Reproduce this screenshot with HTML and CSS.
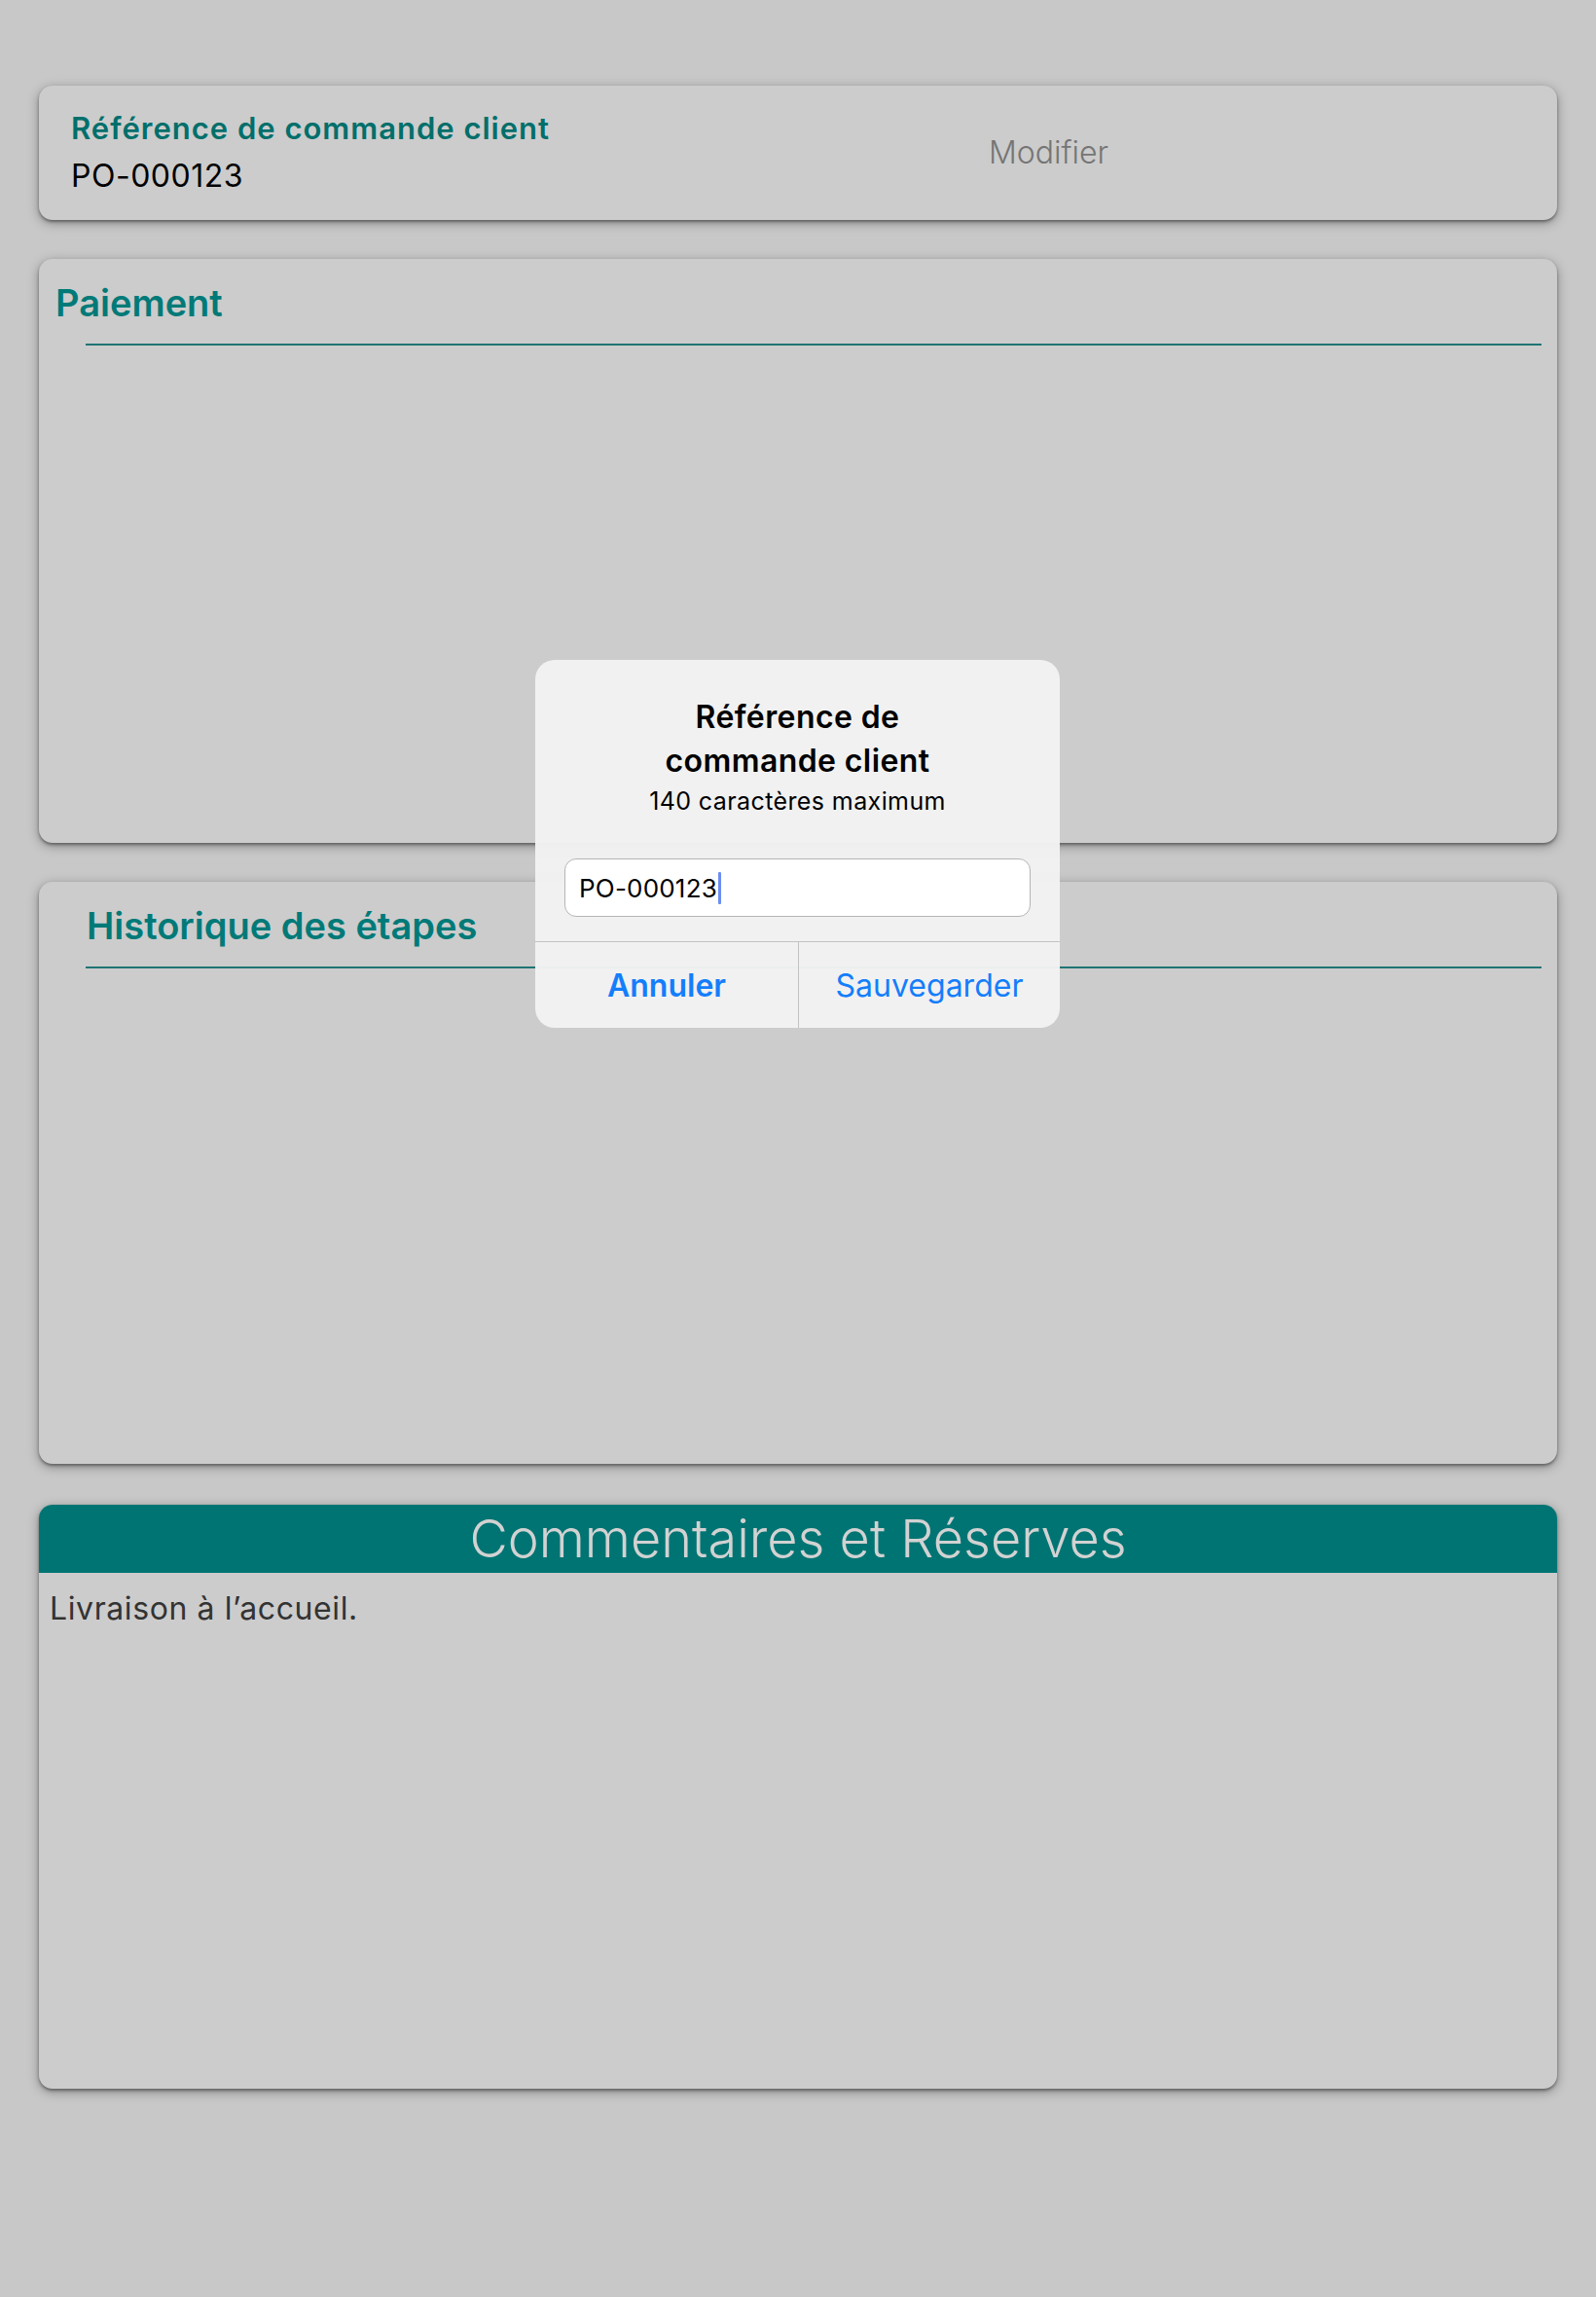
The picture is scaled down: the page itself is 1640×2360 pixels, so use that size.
FILE: index.html
```html
<!DOCTYPE html>
<html lang="fr">
<head>
<meta charset="utf-8">
<title>Commande</title>
<link rel="stylesheet" href="styles.css">
</head>
<body>
<main class="page">
  <section class="card card-ref">
    <div class="ref-block">
      <div class="ref-label">Référence de commande client</div>
      <div class="ref-value">PO-000123</div>
    </div>
    <div class="ref-action">Modifier</div>
  </section>

  <section class="card card-section card-pay">
    <h2 class="section-title pay-title">Paiement</h2>
    <div class="section-rule"></div>
  </section>

  <section class="card card-section card-hist">
    <h2 class="section-title hist-title">Historique des étapes</h2>
    <div class="section-rule"></div>
  </section>

  <section class="card card-section card-comments">
    <h2 class="comments-head">Commentaires et Réserves</h2>
    <p class="comments-body">Livraison à l’accueil.</p>
  </section>
</main>

<div class="alert" role="dialog">
  <div class="alert-text">
    <div class="alert-title">Référence de<br>commande client</div>
    <div class="alert-msg">140 caractères maximum</div>
  </div>
  <div class="alert-field"><span class="field-text">PO-000123</span><span class="caret"></span></div>
  <div class="alert-actions">
    <div class="alert-btn btn-cancel">Annuler</div>
    <div class="alert-btn btn-save">Sauvegarder</div>
  </div>
</div>
</body>
</html>
```

FILE: styles.css
```css
* { box-sizing: border-box; }
html, body {
  margin: 0;
  padding: 0;
  background: #c7c8c7;
}
body {
  width: 1640px;
  height: 2360px;
  position: relative;
  font-family: Inter, "Open Sans", Roboto, sans-serif;
  overflow: hidden;
}
.page {
  padding: 88px 40px 0 40px;
  display: flex;
  flex-direction: column;
  gap: 40px;
}
.card {
  background: #cccccc;
  border-radius: 14px;
  box-shadow: 0 2px 3px rgba(0,0,0,0.35), 0 3px 12px rgba(0,0,0,0.35);
}
.card-ref {
  height: 138px;
  display: grid;
  grid-template-columns: 943px auto;
  align-items: center;
  padding-left: 33px;
}
.ref-label {
  color: #006f6b;
  font-weight: 600;
  font-size: 31px;
  line-height: 36px;
  letter-spacing: 1px;
  margin-top: 0;
}
.ref-value {
  color: #000;
  font-size: 32px;
  line-height: 40px;
  letter-spacing: 0.5px;
  margin-top: 11px;
}
.ref-action {
  color: #757575;
  font-size: 32px;
  font-weight: 300;
  line-height: 40px;
}
.card-section {
  height: 600px;
  display: flex;
  flex-direction: column;
}
.section-title {
  margin: 0;
  color: #007a78;
  font-weight: 600;
  font-size: 38px;
  line-height: 48px;
}
.pay-title { padding: 21px 0 0 17px; }
.hist-title { padding: 21px 0 0 49px; }
.section-rule {
  height: 2px;
  background: #1f7474;
  margin-left: 48px;
  margin-right: 16px;
}
.card-pay .section-rule { margin-top: 18px; }
.card-hist .section-rule { margin-top: 18px; }
.card-hist { height: 598px; margin-bottom: 2px; }
.card-comments { overflow: hidden; }
.comments-head {
  margin: 0;
  height: 70px;
  background: #007473;
  color: #d2d2d2;
  font-weight: 300;
  font-size: 54px;
  line-height: 70px;
  text-align: center;
}
.comments-body {
  margin: 0;
  padding: 17px 0 0 11px;
  color: #333;
  font-size: 32px;
  line-height: 40px;
  letter-spacing: 0.6px;
}
/* alert */
.alert {
  position: absolute;
  left: 550px;
  top: 678px;
  width: 539px;
  height: 378px;
  background: rgba(242,242,242,0.97);
  border-radius: 20px;
  display: flex;
  flex-direction: column;
  overflow: hidden;
}
.alert-text {
  text-align: center;
  padding-top: 36px;
}
.alert-title {
  font-weight: 600;
  font-size: 32px;
  line-height: 45px;
  letter-spacing: 0.4px;
  color: #000;
}
.alert-msg {
  font-size: 25px;
  line-height: 30px;
  letter-spacing: 0.4px;
  color: #000;
  margin-top: 4px;
}
.alert-field {
  margin: 44px 30px 0 30px;
  height: 60px;
  background: #fff;
  border: 1px solid #b5b5b5;
  border-radius: 12px;
  display: flex;
  align-items: center;
  padding-left: 14px;
  font-size: 26px;
  letter-spacing: 0.2px;
  color: #000;
}
.caret {
  display: inline-block;
  width: 3px;
  height: 33px;
  background: #6c8df2;
  border-radius: 1px;
  margin-left: 1px;
}
.alert-actions {
  margin-top: 25px;
  flex: 1;
  display: grid;
  grid-template-columns: 271px 1fr;
  border-top: 1px solid #c3c3c3;
}
.alert-btn {
  display: flex;
  align-items: center;
  justify-content: center;
  color: #147efb;
  font-size: 32px;
}
.btn-cancel {
  font-weight: 600;
  border-right: 1px solid #c3c3c3;
}
```
